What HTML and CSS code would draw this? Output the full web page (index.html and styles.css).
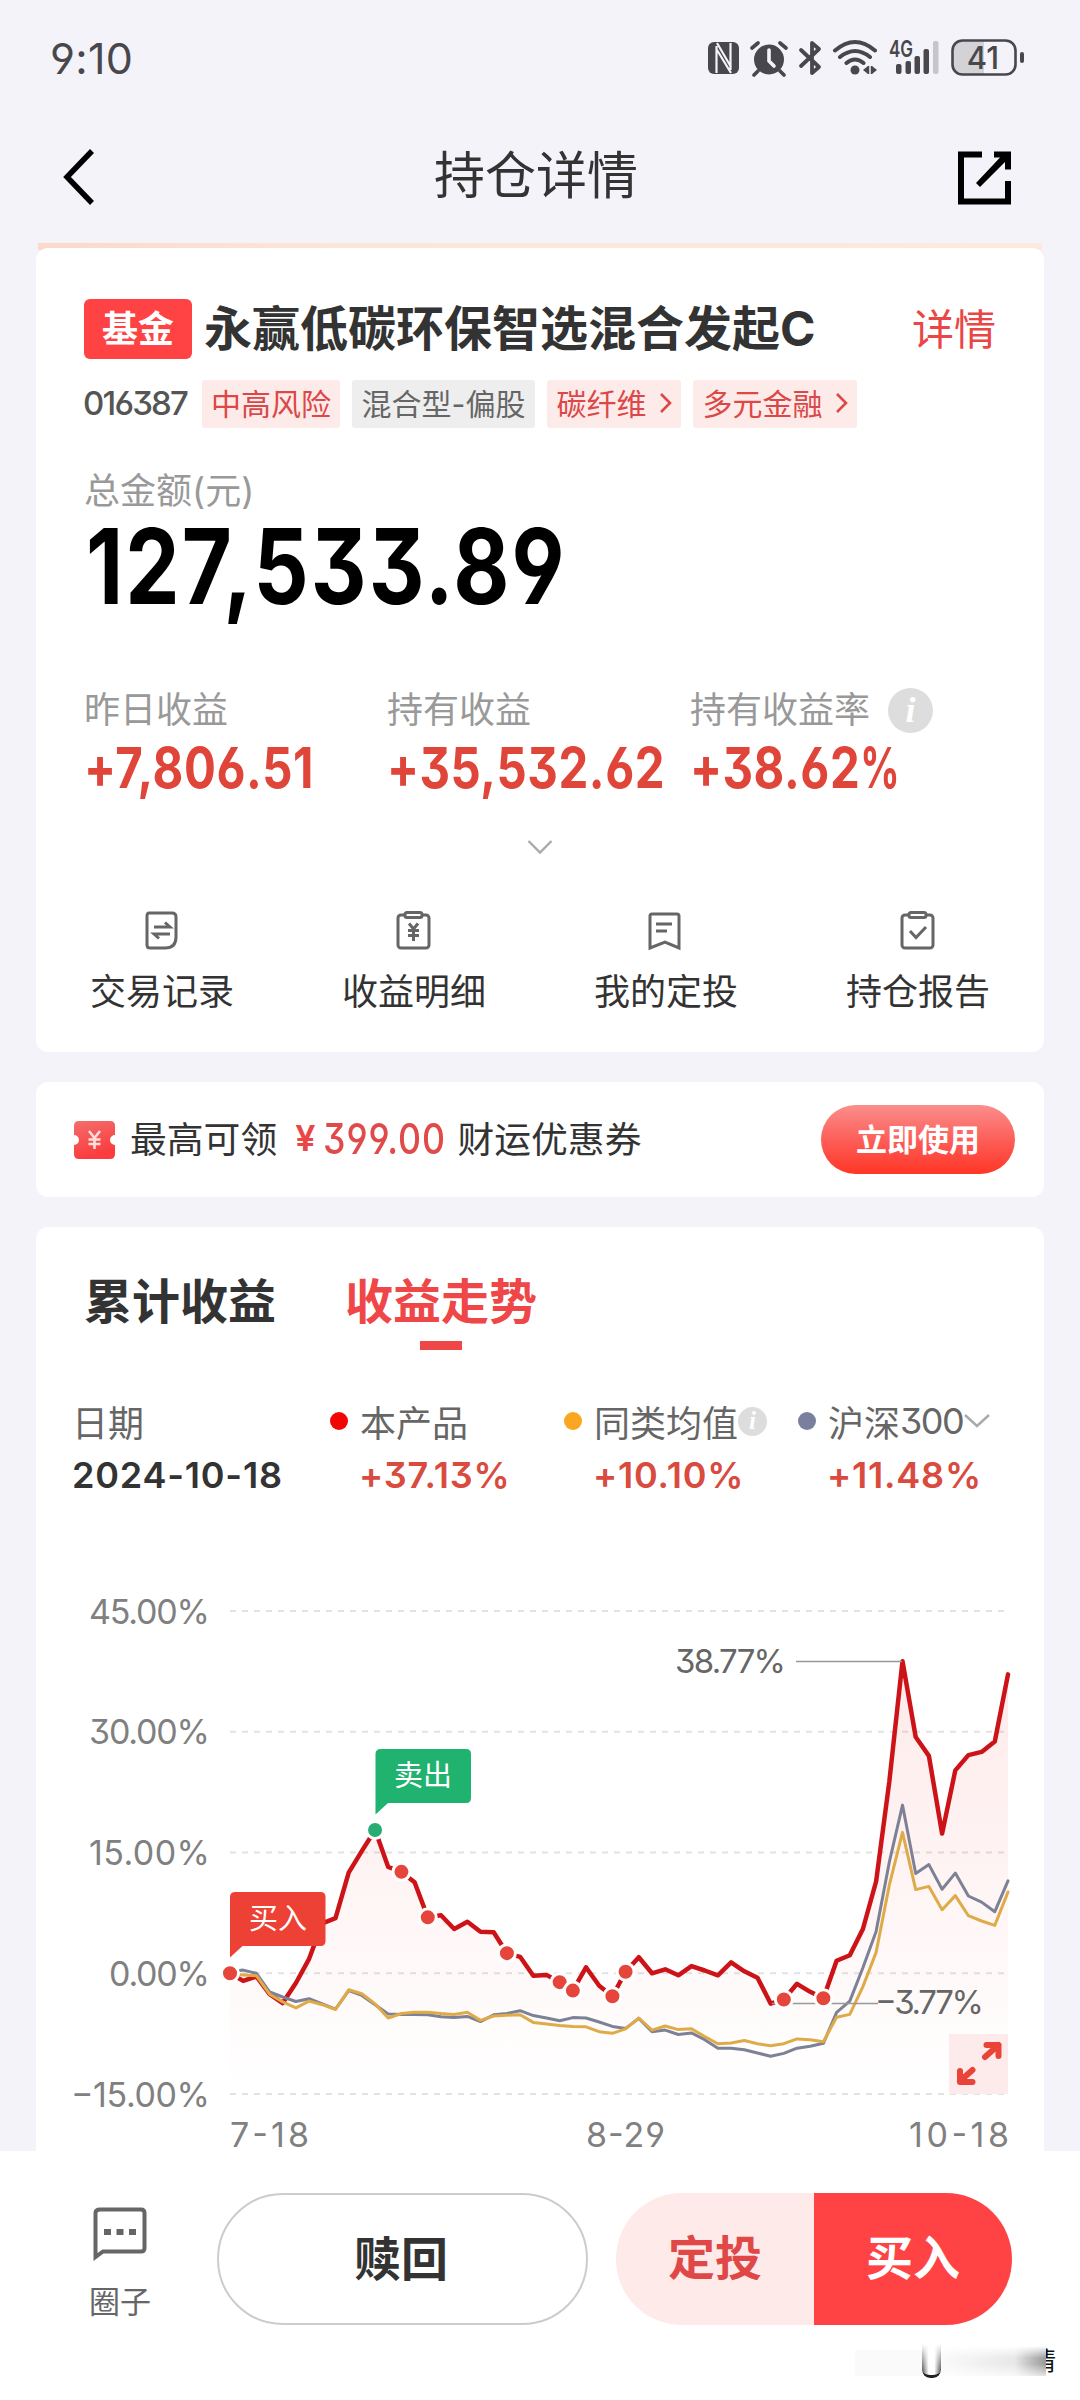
FILE: index.html
```html
<!DOCTYPE html>
<html lang="zh-CN">
  <head>
    <meta charset="UTF-8" />
    <meta name="viewport" content="width=device-width, initial-scale=1.0" />
    <title>持仓详情</title>
    <link rel="stylesheet" href="styles.css">
  </head>
  <body>
    <header class="status-bar">
      <span class="clock">9:10</span>
      <svg class="status-icons" width="320" height="44" viewBox="0 0 320 44">
        <g fill="#48484c">
          <!-- nfc -->
          <rect x="0" y="6" width="31" height="32" rx="6" />
          <path d="M8.500 10v27M22.500 7v27M9 7l14 24M9 14l14 23" stroke="#f4f3f9" stroke-width="2.200" fill="none" />
          <!-- alarm -->
          <circle cx="61" cy="23.500" r="15" />
          <path d="M44 12l6-5M78 12l-6-5M50 35l-4 4M72 35l4 4" stroke="#48484c" stroke-width="3.600" stroke-linecap="round" />
          <path d="M61 14v11l5 5" stroke="#f4f3f9" stroke-width="3.600" fill="none" stroke-linecap="round" />
          <!-- bluetooth -->
          <path d="M93 14l18 17-7 6V7l7 6-18 17" fill="none" stroke="#48484c" stroke-width="3.800" stroke-linejoin="round" stroke-linecap="round" />
          <!-- wifi -->
          <g fill="none" stroke="#48484c" stroke-width="4" stroke-linecap="round">
            <path d="M127 14.500q20-17 40 0M132 21q15-12 30 0M138.500 27q8.500-7 17 0" />
          </g>
          <circle cx="147" cy="34" r="4.500" />
          <path d="M155 34l5-4v8zM169 34l-5-4v8z" />
          <path d="M160.500 30v8M163.500 30v8" stroke="#48484c" stroke-width="1.500" />
          <!-- signal -->
          <rect x="188" y="28" width="5.500" height="10" rx="2" />
          <rect x="197.500" y="25" width="5.500" height="13" rx="2" />
          <rect x="206.500" y="20" width="5.500" height="18" rx="2" />
          <rect x="215.500" y="13" width="5.500" height="25" rx="2" />
          <rect x="225" y="5" width="5.500" height="33" rx="2" fill="#c6c6ca" />
          <!-- battery -->
          <path d="M276 5h-25q-7 0-7 7v19q0 7 7 7h25z" fill="#d3d3d7" />
          <rect x="244.500" y="4.500" width="63" height="34" rx="10" fill="none" stroke="#48484c" stroke-width="2.600" />
          <rect x="312" y="16" width="4" height="11" rx="2" />
        </g>
        <text x="181" y="21" class="net-type" textLength="24" lengthAdjust="spacingAndGlyphs">4G</text>
        <text x="275" y="32.500" class="battery-text">41</text>
      </svg>
    </header>

    <nav class="navbar">
      <svg width="34" height="60" viewBox="0 0 34 60">
        <path d="M30 4L5 30l25 26" fill="none" stroke="#000" stroke-width="5.500" />
      </svg>
      <h1>持仓详情</h1>
      <svg class="share" width="56" height="56" viewBox="0 0 56 56">
        <path d="M25 3.500H4v47h47V30" fill="none" stroke="#000" stroke-width="6" />
        <path d="M37 .5h17v18h-6V11L23 36l-4-4L43 6.500h-6z" fill="#000" />
      </svg>
    </nav>
    <div class="banner-edge"></div>

    <section class="card summary">
      <div class="fund-row">
        <span class="badge">基金</span>
        <h2>永赢低碳环保智选混合发起C</h2>
        <a class="detail">详情</a>
      </div>
      <div class="tags">
        <span class="code">016387</span>
        <span class="tag tag-risk">中高风险</span>
        <span class="tag tag-type">混合型-偏股</span>
        <span class="tag tag-a">碳纤维<svg width="13" height="20" viewBox="0 0 13 20"><path d="M2 1l9 9-9 9" /></svg></span>
        <span class="tag tag-b">多元金融<svg width="13" height="20" viewBox="0 0 13 20"><path d="M2 1l9 9-9 9" /></svg></span>
      </div>
      <p class="label total-label">总金额(元)</p>
      <p class="total"><span class="num">127,533.89</span></p>

      <div class="stats">
        <div>
          <p class="label">昨日收益</p>
          <p class="gain"><span class="num">+7,806.51</span></p>
        </div>
        <div>
          <p class="label">持有收益</p>
          <p class="gain"><span class="num">+35,532.62</span></p>
        </div>
        <div>
          <p class="label">持有收益率 <i class="info">i</i></p>
          <p class="gain"><span class="num">+38.62<span class="percent">%</span></span></p>
        </div>
      </div>

      <svg class="more" width="26" height="16" viewBox="0 0 26 16"><path d="M1.500 2L13 13.500 24.500 2" /></svg>

      <div class="actions">
        <div class="action">
          <svg width="44" height="44" viewBox="0 0 44 44">
            <path d="M9 4h23q4 0 4 4v20q0 11-11 11H10q-3 0-3-3V7q0-3 2-3z" />
            <path d="M14 18h16l-5-4.500M30 25H14l5 4.500" />
          </svg>
          <span>交易记录</span>
        </div>
        <div class="action">
          <svg width="44" height="44" viewBox="0 0 44 44">
            <rect x="6" y="6" width="31" height="33" rx="3" />
            <rect x="13" y="3.500" width="17" height="5" rx="2" fill="#fff" />
            <path d="M17 14.500l4.500 5.500 4.500-5.500M21.500 20v12M16 21.500h11M16 26.500h11" />
          </svg>
          <span>收益明细</span>
        </div>
        <div class="action">
          <svg width="44" height="44" viewBox="0 0 44 44">
            <path d="M8 5h25q2 0 2 2v32l-14-6-15 6V7q0-2 2-2z" />
            <path d="M12 15h16M12 22h11" />
          </svg>
          <span>我的定投</span>
        </div>
        <div class="action">
          <svg width="44" height="44" viewBox="0 0 44 44">
            <rect x="6" y="6" width="31" height="33" rx="3" />
            <rect x="13" y="3.500" width="17" height="5" rx="2" fill="#fff" />
            <path d="M14 22l6 6.500L30 18" />
          </svg>
          <span>持仓报告</span>
        </div>
      </div>
    </section>

    <section class="card coupon">
      <svg width="41" height="38" viewBox="0 0 41 38">
        <defs>
          <linearGradient id="ticket" x1="0" y1="0" x2="0.300" y2="1">
            <stop offset="0" stop-color="#f36e6c" />
            <stop offset="1" stop-color="#fb3b3d" />
          </linearGradient>
        </defs>
        <path d="M5 0h31q5 0 5 5v9a5 5 0 0 0 0 10v9q0 5-5 5H5q-5 0-5-5v-9a5 5 0 0 0 0-10V5q0-5 5-5z" fill="url(#ticket)" />
        <path d="M15 10l5.500 7L26 10M20.500 17v11M14.500 18.500h12M14.500 23h12" fill="none" stroke="#fde0dc" stroke-width="2.600" />
      </svg>
      <span class="coupon-text">最高可领</span>
      <span class="yen">¥</span>
      <span class="coupon-price"><span class="num">399.00</span></span>
      <span class="coupon-text">财运优惠券</span>
      <button class="use-btn">立即使用</button>
    </section>

    <section class="card trend">
      <div class="tabs">
        <span class="tab">累计收益</span>
        <span class="tab active">收益走势</span>
      </div>

      <div class="legend">
        <div>
          <p class="name">日期</p>
          <p class="value date">2024-10-18</p>
        </div>
        <div class="series">
          <p class="name"><b class="dot dot-red"></b>本产品</p>
          <p class="value">+37.13%</p>
        </div>
        <div class="series">
          <p class="name"><b class="dot dot-yellow"></b>同类均值<i class="info small">i</i></p>
          <p class="value">+10.10%</p>
        </div>
        <div class="series">
          <p class="name"><b class="dot dot-gray"></b>沪深<span class="index-no">300</span><svg width="28" height="16" viewBox="0 0 28 16"><path d="M2 2l12 11L26 2" /></svg></p>
          <p class="value">+11.48%</p>
        </div>
      </div>

      <svg class="chart" width="1008" height="651" viewBox="0 0 1008 651">
        <defs>
          <linearGradient id="area" gradientUnits="userSpaceOnUse" x1="0" y1="161" x2="0" y2="594">
            <stop offset="0" stop-color="#f53b3b" stop-opacity="0.110" />
            <stop offset="1" stop-color="#f53b3b" stop-opacity="0" />
          </linearGradient>
        </defs>
        <g id="grid" class="axis"></g>
        <g id="lines"></g>
        <g class="callout">
          <path d="M760 161.500H866M736 503.500H842" />
          <text x="639" y="173" textLength="111">38.77%</text>
          <text x="839" y="514" textLength="109">−3.77%</text>
        </g>
        <g id="marks"></g>
        <path d="M345 249h85q5 0 5 5v44q0 5-5 5h-78l-12.500 11.500V254q0-5 5.500-5z" fill="#20b26f" />
        <text x="387" y="286" class="flag">卖出</text>
        <path d="M199.500 392h85q5 0 5 5v44q0 5-5 5h-78l-12.500 11.500V397q0-5 5.500-5z" fill="#ee4135" />
        <text x="242" y="429" class="flag">买入</text>
        <rect x="913" y="534" width="59" height="60" fill="#fdebeb" />
        <path d="M949 557l13.500-12M950.500 545h12v11M936.500 570l-12.500 11M924 571v11h12.500" class="expand" />
        <g class="axis">
          <text x="194" y="647" textLength="79">7-18</text>
          <text x="550" y="647" textLength="79">8-29</text>
          <text x="873" y="647" textLength="100">10-18</text>
        </g>
      </svg>
    </section>

    <footer class="bottom-bar">
      <div class="circle">
        <svg width="54" height="54" viewBox="0 0 54 54">
          <path d="M7 2.500h41q3.500 0 3.500 3.500v35q0 3.500-3.500 3.500H10L2.500 50V6q0-3.500 4.500-3.500z" fill="none" stroke="#666" stroke-width="4" />
          <path d="M11 22h7v6h-7zM23.500 22h7v6h-7zM36 22h7v6h-7z" fill="#666" />
        </svg>
        <span>圈子</span>
      </div>
      <button class="redeem">赎回</button>
      <div class="buy-group">
        <button class="invest">定投</button>
        <button class="buy">买入</button>
      </div>
      <div class="smear">
        <span class="smear-left"></span>
        <span class="smear-u"></span>
        <span class="smear-right"></span>
        <span class="smear-char">情</span>
      </div>
    </footer>
    <script src="script.js"></script>
  </body>
</html>
```

FILE: styles.css
```css
* {
  box-sizing: border-box;
}

body {
  display: flex;
  flex-direction: column;
  width: 1080px;
  height: 2400px;
  margin: 0;
  overflow: hidden;
  background-color: #f4f3f9;
  color: #333;
  font-family: "Inter", "Noto Sans CJK SC", sans-serif;
  font-feature-settings: "cv03", "cv04", "cv09";
}

h1,
h2,
p {
  margin: 0;
  font-weight: normal;
}

button {
  border: none;
  padding: 0;
  font-family: inherit;
}

.num {
  display: inline-block;
  transform: scaleX(0.83);
  transform-origin: left center;
  white-space: nowrap;
}

/* status bar */
.status-bar {
  display: flex;
  justify-content: space-between;
  align-items: center;
  height: 116px;
  padding: 0 52px 0 50px;
}

.clock {
  font-size: 43px;
  letter-spacing: 0.300px;
  color: #48484c;
}

.net-type {
  font-size: 23px;
  font-weight: 600;
  fill: #48484c;
}

.battery-text {
  font-size: 31px;
  font-weight: 500;
  fill: #48484c;
  text-anchor: middle;
}

/* title bar */
.navbar {
  display: flex;
  justify-content: space-between;
  align-items: center;
  height: 127px;
  padding: 0 67px 5px 62px;
}

.navbar h1 {
  margin-left: 19px;
  padding-bottom: 2px;
  font-size: 51px;
  line-height: 60px;
}

.share {
  margin-top: 3px;
}

.banner-edge {
  height: 7px;
  margin: 0 38px -2px;
  background: linear-gradient(to right, #fbd9cc, #fce6d8 30%, #fdeadd);
}

.card {
  margin: 0 36px 30px;
  background-color: #fff;
  border-radius: 12px;
  flex-shrink: 0;
}

/* fund summary */
.summary {
  height: 804px;
  padding-top: 51px;
}

.fund-row {
  display: flex;
  align-items: center;
  height: 60px;
  padding: 0 48px;
}

.badge {
  width: 108px;
  height: 60px;
  border-radius: 6px;
  background-color: #ff4243;
  color: #fff;
  font-size: 36px;
  font-weight: bold;
  line-height: 60px;
  text-align: center;
}

.fund-row h2 {
  margin-left: 12px;
  font-size: 48px;
  font-weight: bold;
  line-height: 60px;
}

.detail {
  margin-left: auto;
  padding-bottom: 5px;
  font-size: 42px;
  color: #ea4645;
}

.tags {
  display: flex;
  align-items: center;
  height: 48px;
  margin-top: 21px;
  padding-left: 47px;
}

.code {
  width: 119px;
  padding-bottom: 3px;
  font-size: 33px;
  font-weight: 500;
  letter-spacing: -1.800px;
  color: #555;
}

.tag {
  display: flex;
  align-items: center;
  justify-content: center;
  height: 48px;
  margin-right: 12px;
  padding-bottom: 5px;
  border-radius: 3px;
  background-color: #fdebea;
  color: #dc4747;
  font-size: 30px;
  white-space: nowrap;
}

.tag svg {
  margin: 3px 0 0 12px;
  fill: none;
  stroke: #dc4747;
  stroke-width: 2.600;
}

.tag-risk {
  width: 138px;
}

.tag-type {
  width: 183px;
  background-color: #eee;
  color: #666;
}

.tag-a {
  width: 134px;
}

.tag-b {
  width: 164px;
}

.label {
  height: 50px;
  font-size: 36px;
  line-height: 50px;
  color: #999;
}

.total-label {
  margin: 38px 0 0 48px;
}

.total {
  height: 100px;
  margin-left: 50px;
  font-size: 104px;
  font-weight: 700;
  line-height: 100px;
  letter-spacing: 2.500px;
  color: #000;
}

.stats {
  display: grid;
  grid-template-columns: 303px 303px 1fr;
  margin: 69px 0 0 48px;
}

.stats .label {
  display: flex;
  align-items: center;
}

.info {
  display: inline-block;
  width: 45px;
  height: 45px;
  margin-left: 18px;
  border-radius: 50%;
  background-color: #ddd;
  color: #fff;
  font: italic bold 36px/44px "Liberation Serif", serif;
  text-align: center;
}

.info.small {
  width: 29px;
  height: 29px;
  margin-left: 0;
  font-size: 25px;
  line-height: 28px;
}

.gain {
  height: 66px;
  font-size: 57px;
  font-weight: 650;
  line-height: 66px;
  letter-spacing: 0.700px;
  color: #e0453a;
}

.percent {
  display: inline-block;
  transform: scaleX(0.82);
  transform-origin: left center;
}

.more {
  display: block;
  margin: 38px auto 0;
  fill: none;
  stroke: #aaa;
  stroke-width: 2.400;
}

.actions {
  display: grid;
  grid-template-columns: repeat(4, 1fr);
  margin-top: 54px;
}

.action {
  display: flex;
  flex-direction: column;
  align-items: center;
  gap: 14px;
  font-size: 36px;
  line-height: 50px;
}

.action svg {
  fill: none;
  stroke: #666;
  stroke-width: 3;
}

/* coupon strip */
.coupon {
  display: flex;
  align-items: center;
  height: 115px;
  padding: 0 29px 0 38px;
}

.coupon-text {
  margin-left: 15px;
  padding-bottom: 6px;
  font-size: 36.800px;
}

.yen {
  margin-left: 18px;
  padding-bottom: 3px;
  font-size: 36px;
  font-weight: 600;
  color: #ea4646;
}

.coupon-price {
  width: 119px;
  margin-left: 8px;
  padding-bottom: 4px;
  font-size: 43px;
  font-weight: 500;
  letter-spacing: 1.200px;
  color: #e04a48;
}

.use-btn {
  width: 194px;
  height: 69px;
  margin-left: auto;
  padding-bottom: 5px;
  border-radius: 35px;
  background: linear-gradient(#fa8e8c, #fd5a54 55%, #ff3625);
  color: #fff;
  font-size: 31px;
  font-weight: bold;
}

/* trend card */
.trend {
  height: 924px;
  margin-bottom: 0;
  padding-top: 45px;
  border-radius: 12px 12px 0 0;
}

.tabs {
  display: flex;
  gap: 69px;
  height: 78px;
  padding-left: 48px;
}

.tab {
  font-size: 48px;
  font-weight: bold;
  line-height: 60px;
}

.active {
  color: #ef4648;
}

.active::after {
  content: "";
  display: block;
  width: 42px;
  height: 9px;
  margin: 9px auto 0;
  background-color: #ef4648;
}

.legend {
  display: grid;
  grid-template-columns: 258px 234px 234px 1fr;
  height: 101px;
  margin-top: 49px;
  padding-left: 36px;
}

.name {
  display: flex;
  align-items: center;
  height: 44px;
  font-size: 36px;
  color: #666;
  white-space: nowrap;
}

.name svg {
  fill: none;
  stroke: #aaa;
  stroke-width: 2.400;
}

.index-no {
  letter-spacing: -1.500px;
}

.dot {
  width: 18px;
  height: 18px;
  margin-right: 12px;
  border-radius: 50%;
}

.dot-red {
  background-color: #f40505;
}

.dot-yellow {
  background-color: #f9a620;
}

.dot-gray {
  background-color: #7b7f9e;
}

.value {
  height: 50px;
  margin-top: 7px;
  font-size: 36px;
  font-weight: 600;
  line-height: 50px;
  letter-spacing: 0.800px;
  color: #d94a3f;
}

.value.date {
  color: #333;
}

.series .value {
  padding-left: 29px;
}

/* chart */
.chart {
  display: block;
  overflow: visible;
}

.grid-line {
  stroke: #e2e2e2;
  stroke-width: 2;
  stroke-dasharray: 6 6;
}

.axis text {
  font-size: 34px;
  fill: #808080;
}

.line {
  fill: none;
  stroke-linejoin: round;
  stroke-linecap: round;
}

.line-product {
  stroke: #cc1418;
  stroke-width: 4.500;
}

.line-index {
  stroke: #7d8196;
  stroke-width: 3;
}

.line-average {
  stroke: #dfaa48;
  stroke-width: 3;
}

.callout path {
  fill: none;
  stroke: #999;
  stroke-width: 1.500;
}

.callout text {
  font-size: 33px;
  fill: #666;
}

.flag {
  text-anchor: middle;
  font-size: 29px;
  fill: #fff;
}

.expand {
  fill: none;
  stroke: #ea4438;
  stroke-width: 6;
  stroke-linecap: round;
  stroke-linejoin: round;
}

/* bottom bar */
.bottom-bar {
  position: relative;
  display: flex;
  align-items: flex-start;
  height: 249px;
  padding-top: 42px;
}

.bottom-bar,
.redeem {
  background-color: #fff;
}

.circle {
  display: flex;
  flex-direction: column;
  align-items: center;
  gap: 19px;
  width: 66px;
  margin: 14px 0 0 87px;
  font-size: 31px;
  line-height: 44px;
  color: #666;
}

.redeem {
  width: 371px;
  height: 132px;
  margin-left: 64px;
  padding: 0 3px 8px 0;
  border: 2px solid #ccc;
  border-radius: 66px;
  color: #333;
  font-size: 47px;
  font-weight: bold;
}

.buy-group {
  display: flex;
  width: 396px;
  height: 132px;
  margin-left: 28px;
  border-radius: 66px;
  overflow: hidden;
}

.buy-group button {
  flex: 1;
  padding-bottom: 10px;
  font-size: 47px;
  font-weight: bold;
}

.invest {
  background-color: #fdeae9;
  color: #e04848;
}

.buy {
  background-color: #ff4243;
  color: #fff;
}

/* smeared mark lying over the corner of the bar */
.smear {
  position: absolute;
  right: 24px;
  bottom: 22px;
  display: flex;
  align-items: flex-end;
  height: 34px;
}

.smear-left {
  width: 67px;
  height: 26px;
  margin-bottom: 2px;
  background-color: #fafafa;
}

.smear-u {
  width: 19px;
  height: 34px;
  border-bottom: 3px solid #222;
  border-radius: 0 0 8px 8px;
  background: linear-gradient(to right, #555, #fff 35%, #fff 65%, #555);
  -webkit-mask-image: linear-gradient(transparent, #000 80%);
}

.smear-right {
  width: 105px;
  height: 30px;
  margin-bottom: 2px;
  background: linear-gradient(to right, #fafafa, #e8e8e8 70%, #999);
  -webkit-mask-image: linear-gradient(transparent, #000 40%, #000 60%, #0004);
}

.smear-char {
  display: flex;
  justify-content: flex-end;
  width: 10px;
  height: 34px;
  overflow: hidden;
  font-size: 25px;
  line-height: 34px;
  color: #111;
}
```

FILE: script.js
```js
const product = [
  0, -0.95, -0.4, -2.6, -3.7, -1.2, 1.8, 6.2, 6.85, 12.5, 15.2, 17.8, 13.2, 12.6, 11.3,
  6.95, 7.2, 5.5, 6.4, 5.15, 5.1, 2.5, 2.05, -0.3, -0.2, -1.1, -2.15, 0.75, -1.55, -2.85,
  0.2, 2, 0, 0.5, -0.25, 0.9, 0.35, -0.25, 1.35, 0.25, -0.55, -3.77, -3.25, -1.3, -2.3,
  -3.1, 1.55, 2.25, 5.5, 11.4, 23.8, 38.77, 29.35, 27, 17.35, 25.2, 27.1, 27.5, 28.8, 37.13
];
const csi300 = [
  0.2, 0.4, 0, -2.3, -2.95, -3.5, -3.15, -3.8, -4.45, -2.15, -2.75, -3.9, -5.05, -5.1, -5.1,
  -5.15, -5.4, -5.5, -5.35, -6, -5.15, -5, -4.65, -5.25, -5.55, -5.9, -5.5, -5.55, -6.05, -6.6,
  -6.85, -5.6, -7.25, -7.05, -7.6, -7.4, -8.25, -9.3, -9.3, -9.5, -9.9, -10.3, -9.95, -9.3, -9.05,
  -8.7, -4.85, -3.45, 0.7, 5.2, 13.8, 20.9, 12.4, 13.5, 10.45, 12.45, 9.6, 8.85, 7.65, 11.48
];
const average = [
  -0.1, -0.2, -0.3, -2.6, -3.55, -4.3, -3.45, -3.9, -4.5, -2.05, -2.55, -3.8, -5.55, -5, -4.85,
  -4.85, -5, -5.1, -4.85, -5.85, -5.3, -5.2, -5.15, -6.1, -6.3, -6.5, -6.6, -6.65, -7.25, -7.45,
  -6.9, -5.55, -7.05, -6.55, -7, -6.9, -7.85, -8.75, -8.65, -8.35, -8.75, -9, -8.75, -8.15, -8.25,
  -8.5, -5.45, -5.1, -1.65, 2.6, 10.95, 17.5, 10.4, 10.8, 7.9, 9.65, 7.15, 6.5, 5.95, 10.1
];
const buys = [0, 13, 15, 21, 25, 26, 29, 30, 42, 45];
const sells = [11];

const left = 194;
const right = 972;
const x = i => left + (i * (right - left)) / 59;
const y = v => 473.3 - v * 8.05;
const points = data => data.map((v, i) => `${x(i).toFixed(1)},${y(v).toFixed(1)}`).join(" ");

// grid lines with their labels
let grid = "";
[45, 30, 15, 0, -15].forEach(v => {
  const label = v.toFixed(2).replace("-", "−") + "%";
  const width = v < 0 ? 139 : v === 0 ? 101 : 121;
  grid += `<line class="grid-line" x1="${left}" x2="${right}" y1="${y(v)}" y2="${y(v)}" />
    <text x="${174 - width}" y="${y(v) + 12.5}" textLength="${width}">${label}</text>`;
});
document.getElementById("grid").innerHTML = grid;

document.getElementById("lines").innerHTML = `
  <polygon points="${left},${y(-15)} ${points(product)} ${right},${y(-15)}" fill="url(#area)" />
  <polyline class="line line-product" points="${points(product)}" />
  <polyline class="line line-index" points="${points(csi300)}" />
  <polyline class="line line-average" points="${points(average)}" />`;

const mark = (i, color) =>
  `<circle cx="${x(i)}" cy="${y(product[i])}" r="8.500" fill="${color}" stroke="#fff" stroke-width="3" />`;
document.getElementById("marks").innerHTML =
  buys.map(i => mark(i, "#e5453a")).join("") + sells.map(i => mark(i, "#27ad74")).join("");
```
